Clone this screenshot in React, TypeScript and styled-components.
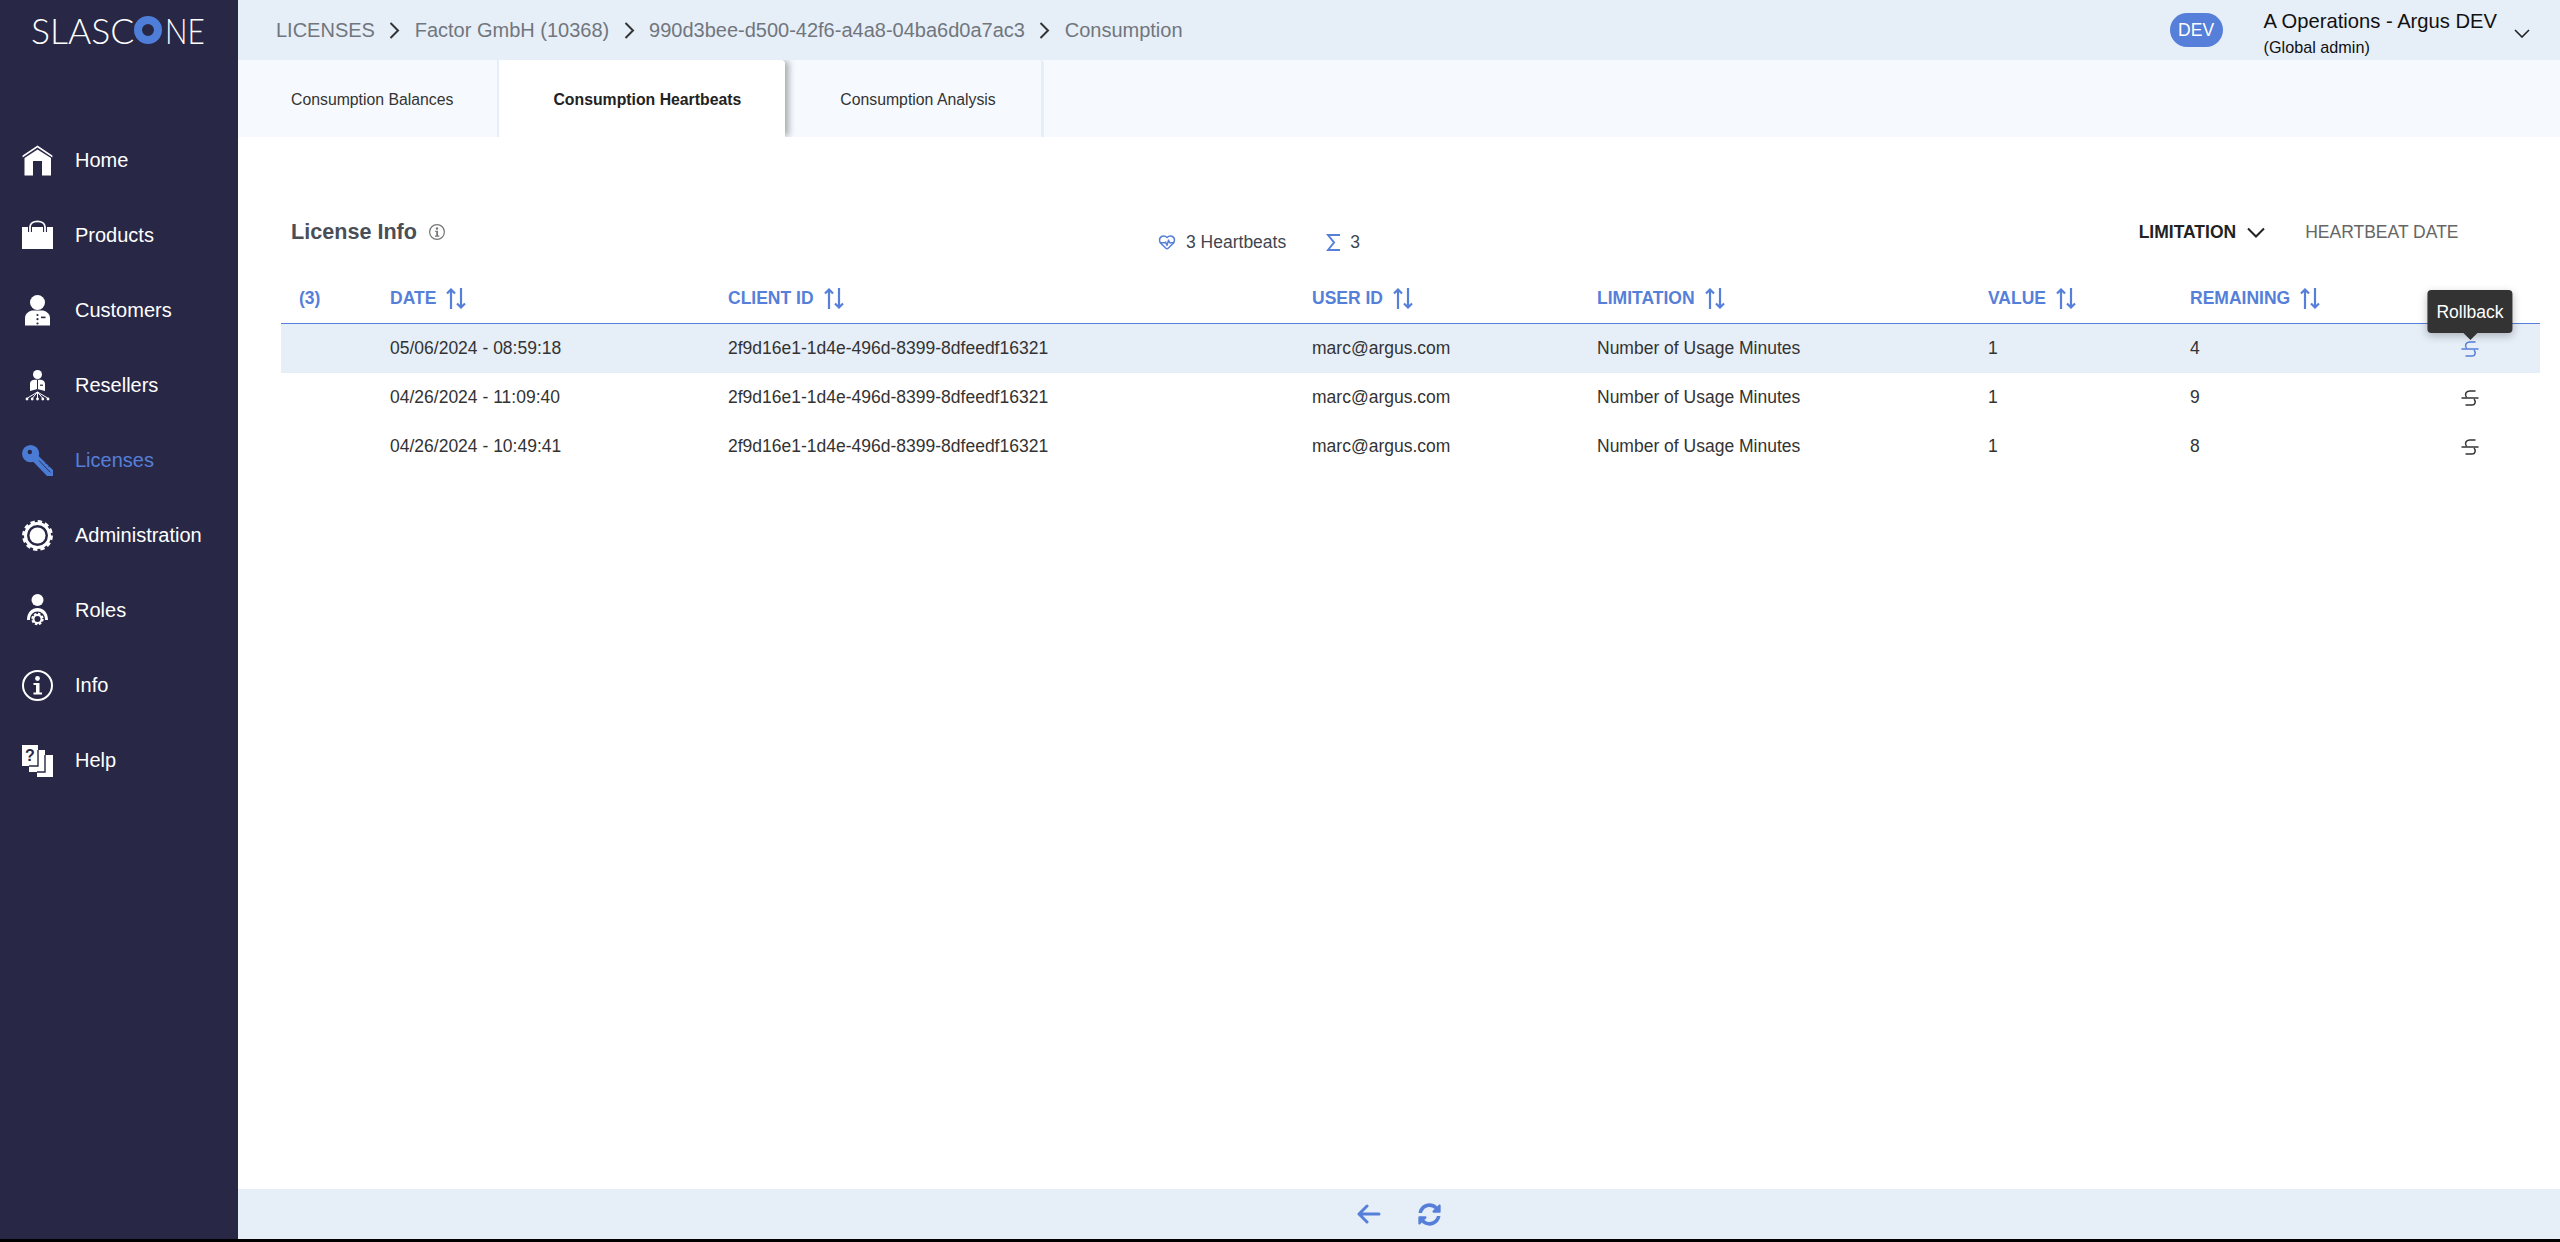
import React from 'react';
import styled, { createGlobalStyle } from 'styled-components';
import { FaSyncAlt } from 'react-icons/fa';
import { HeartPulse } from 'lucide-react';

const BLUE = '#557fd9';

const GlobalStyle = createGlobalStyle`
  html, body {
    margin: 0;
    padding: 0;
    background: #000;
    font-family: "Liberation Sans", Arial, sans-serif;
    overflow: hidden;
  }
`;

const Page = styled.div`
  display: flex;
  width: 2560px;
  height: 1239px;
  background: #fff;
`;

const Sidebar = styled.aside`
  flex: 0 0 238px;
  background: #282846;
  display: flex;
  flex-direction: column;
`;

const Logo = styled.div`
  height: 60px;
  padding-left: 31px;
  display: flex;
  align-items: center;
  color: #fff;
  font-family: Lato, "Open Sans", sans-serif;
  font-weight: 300;
  font-size: 35.5px;
  box-sizing: border-box;
`;

const LogoRing = styled.svg`
  margin: 0 3px 0 0;
  flex: none;
`;

const LogoEnd = styled.span`
  display: inline-block;
  transform: scaleX(0.84);
  transform-origin: left center;
`;

const Nav = styled.nav`
  padding-top: 63px;
  display: flex;
  flex-direction: column;
`;

const NavItem = styled.a<{ $active?: boolean }>`
  height: 75px;
  padding-left: 22px;
  display: flex;
  align-items: center;
  gap: 22px;
  font-size: 20px;
  color: ${(p) => (p.$active ? BLUE : '#fff')};
`;

const Main = styled.div`
  flex: 1;
  min-width: 0;
  display: flex;
  flex-direction: column;
`;

const TopBar = styled.header`
  height: 60px;
  flex: none;
  background: #e6eef8;
  display: flex;
  align-items: center;
  padding: 0 30px 0 38px;
`;

const Crumbs = styled.div`
  display: flex;
  align-items: center;
  gap: 14.4px;
  font-size: 20px;
  color: #71767d;
`;

const DevBadge = styled.span`
  margin-left: auto;
  width: 53px;
  height: 34px;
  border-radius: 17px;
  background: ${BLUE};
  color: #fff;
  font-size: 17.5px;
  display: flex;
  align-items: center;
  justify-content: center;
`;

const Account = styled.div`
  margin-left: 41px;
  padding-top: 6px;
  display: flex;
  flex-direction: column;
  color: #111;
`;

const AccountName = styled.span`
  font-size: 20.2px;
  line-height: 23px;
`;

const AccountRole = styled.span`
  font-size: 16.2px;
  line-height: 19px;
  margin-top: 5px;
`;

const AccountChevron = styled.svg`
  margin-left: 17px;
  margin-top: 6px;
`;

const TabBar = styled.div`
  height: 77px;
  flex: none;
  background: #f6fafe;
  display: flex;
  overflow: hidden;
`;

const Tab = styled.div<{ $active?: boolean; $pad: string }>`
  display: flex;
  align-items: center;
  padding: ${(p) => p.$pad};
  font-size: 15.8px;
  color: #333;
  border-top-right-radius: 4px;
  ${(p) =>
    p.$active
      ? `
    background: #fff;
    color: #222;
    font-weight: bold;
    box-shadow: 5px 0 6px -1px rgba(0, 0, 0, 0.3);
    position: relative;
    margin-left: -1px;
  `
      : `
    border-right: 3px solid #e6eef8;
  `}
`;

const Content = styled.main`
  flex: 1;
  padding: 0 20px 0 43px;
  display: flex;
  flex-direction: column;
`;

const InfoBar = styled.div`
  height: 137px;
  box-sizing: border-box;
  padding: 78px 81.5px 0 10px;
  display: flex;
  align-items: flex-start;
`;

const Title = styled.div`
  flex: 0 0 867px;
  display: flex;
  align-items: center;
  gap: 12px;
  height: 34px;
  font-size: 21.6px;
  font-weight: bold;
  color: #4a4f57;
`;

const Stats = styled.div`
  display: flex;
  align-items: center;
  height: 34px;
  margin-top: 10px;
  font-size: 17.5px;
  color: #3f4650;
`;

const Stat = styled.span`
  display: flex;
  align-items: center;
  gap: 10px;
  margin-right: 40px;
`;

const Groups = styled.div`
  margin-left: auto;
  display: flex;
  align-items: center;
  height: 34px;
  font-size: 17.5px;
  color: #666;
`;

const GroupActive = styled.span`
  display: flex;
  align-items: center;
  gap: 11px;
  margin-right: 40px;
  color: #222;
  font-weight: bold;
`;

const Row = styled.div<{ $head?: boolean; $hover?: boolean }>`
  display: grid;
  grid-template-columns: 109px 338px 584px 285px 391px 202px 210px 1fr;
  align-items: center;
  height: ${(p) => (p.$head ? '50px' : '49px')};
  box-sizing: border-box;
  font-size: 17.5px;
  color: ${(p) => (p.$head ? BLUE : '#333')};
  background: ${(p) => (p.$hover ? '#e6eef8' : 'transparent')};
  font-weight: ${(p) => (p.$head ? 'bold' : 'normal')};
  border-bottom: ${(p) => (p.$head ? `1.5px solid ${BLUE}` : '0')};
`;

const CountCell = styled.span`
  padding-left: 18px;
`;

const HeadCell = styled.span`
  display: flex;
  align-items: center;
  gap: 10px;
`;

const ActionCell = styled.div<{ $hover?: boolean }>`
  align-self: stretch;
  position: relative;
  display: flex;
  align-items: center;
  justify-content: center;
  color: ${(p) => (p.$hover ? BLUE : '#333')};
`;

const Tooltip = styled.div`
  position: absolute;
  left: 50%;
  bottom: calc(100% - 9px);
  transform: translateX(-50%);
  padding: 2px 9px 0;
  height: 43px;
  box-sizing: border-box;
  display: flex;
  align-items: center;
  background: #333;
  color: #fff;
  font-size: 17.5px;
  border-radius: 4px;
  box-shadow: 0 3px 8px rgba(0, 0, 0, 0.25);
  &::after {
    content: '';
    position: absolute;
    top: 100%;
    left: 50%;
    margin-left: -7px;
    border: 7px solid transparent;
    border-top-color: #333;
    border-bottom: 0;
  }
`;

const Footer = styled.footer`
  height: 50px;
  flex: none;
  background: #e6eef8;
  display: flex;
  align-items: center;
  justify-content: center;
  gap: 37px;
  color: ${BLUE};
`;

const Chevron = () => (
  <svg width="11" height="17" viewBox="0 0 11 17" fill="none" stroke="#333" strokeWidth="2">
    <path d="M1.5 1 L9 8.5 L1.5 16" />
  </svg>
);

const SortIcon = () => (
  <svg width="21" height="21" viewBox="0 0 21 21" fill="none" stroke={BLUE} strokeWidth="2.2">
    <path d="M5 21 V1.5 M1 5.5 L5 1.5 L9 5.5" />
    <path d="M15 0 V19.5 M11 15.5 L15 19.5 L19 15.5" />
  </svg>
);

const RollbackIcon = () => (
  <svg width="18" height="16" viewBox="0 0 18 16" fill="none" stroke="currentColor" strokeWidth="1.5">
    <path d="M0.5 8 H17.5" />
    <path d="M14.5 1 H8.5 C5 1 3.2 4.5 5.6 7.4" />
    <path d="M13 9 C15.2 11.5 14.2 15 11 15 H4.5" />
  </svg>
);

const HomeIcon = () => (
  <svg width="31" height="31" viewBox="0 0 31 31" fill="#fff">
    <path d="M0.6 10.6 L15.5 0.4 L30.4 10.6 L30.4 12.4 L15.5 2.6 L0.6 12.4 Z" />
    <path d="M2.5 13 L15.5 4.6 L29 13 V30.6 H20 V16 H11 V30.6 H2.5 Z" />
  </svg>
);

const ProductsIcon = () => (
  <svg width="31" height="33" viewBox="0 0 31 33" fill="none">
    <rect x="0" y="8" width="31" height="22" fill="#fff" />
    <path d="M8 13 V8 C8 -1.5 23 -1.5 23 8 V13" stroke="#282846" strokeWidth="4" />
    <path d="M8 13 V8 C8 0.5 23 0.5 23 8 V13" stroke="#fff" strokeWidth="1.8" />
  </svg>
);

const CustomersIcon = () => (
  <svg width="31" height="31" viewBox="0 0 31 31">
    <circle cx="15.5" cy="7.5" r="7.5" fill="#fff" />
    <path d="M3 30.6 V23 C3 18 8 15.5 11 15.5 H20 C23 15.5 28 18 28 23 V30.6 Z" fill="#fff" />
    <g fill="#282846">
      <circle cx="15.5" cy="20" r="1.1" />
      <circle cx="15.5" cy="24.2" r="1.1" />
      <circle cx="15.5" cy="28.5" r="1.1" />
      <rect x="19" y="21.6" width="4.5" height="1.6" />
    </g>
  </svg>
);

const ResellersIcon = () => (
  <svg width="31" height="31" viewBox="0 0 31 31">
    <circle cx="15.5" cy="4.5" r="4.5" fill="#fff" />
    <path d="M8 21 V14 C8 11 10.5 9.8 13 9.8 H18 C20.5 9.8 23 11 23 14 V21 L15.5 19 Z" fill="#fff" />
    <path d="M15.5 10 V19" stroke="#282846" strokeWidth="1" />
    <rect x="18" y="14.6" width="3" height="1.2" fill="#282846" />
    <path d="M15.5 22 L5.5 28 M15.5 22 L10.5 28 M15.5 22 V28 M15.5 22 L20.5 28 M15.5 22 L25.5 28" stroke="#fff" strokeWidth="1" />
    <g fill="#fff">
      <circle cx="5" cy="29" r="1.4" />
      <circle cx="10.2" cy="29" r="1.4" />
      <circle cx="15.5" cy="29" r="1.4" />
      <circle cx="20.8" cy="29" r="1.4" />
      <circle cx="26" cy="29" r="1.4" />
    </g>
  </svg>
);

const KeyIcon = () => (
  <svg width="31" height="31" viewBox="0 0 31 31">
    <circle cx="8.6" cy="8.6" r="8.6" fill="#4a7bd5" />
    <circle cx="7.8" cy="7" r="2.2" fill="#282846" />
    <path d="M10 15.5 L15.5 10 L31 25 V31 H25 Z" fill="#4a7bd5" />
    <path d="M17 15.5 L28.5 27.5 M23.5 19 L26 16.5 M26.5 22 L29 19.5" stroke="#282846" strokeWidth="0.9" />
  </svg>
);

const GearIcon = () => (
  <svg width="31" height="31" viewBox="0 0 31 31" fill="none">
    <circle cx="15.5" cy="15.5" r="13.6" stroke="#fff" strokeWidth="3.6" strokeDasharray="4.2 2.9" />
    <circle cx="15.5" cy="15.5" r="12" stroke="#fff" strokeWidth="3" />
    <circle cx="15.5" cy="15.5" r="8" fill="#fff" />
  </svg>
);

const RolesIcon = () => (
  <svg width="31" height="33" viewBox="0 0 31 33" fill="none">
    <circle cx="15.5" cy="6" r="6" fill="#fff" />
    <path d="M5 26 C5 18 10 14 15.5 14 C21 14 26 18 26 26 H22 C22 21 19 18 15.5 18 C12 18 9 21 9 26 Z" fill="#fff" />
    <circle cx="15.5" cy="25" r="7.6" fill="#282846" />
    <circle cx="15.5" cy="25" r="5" stroke="#fff" strokeWidth="2.4" strokeDasharray="2.4 1.5" />
    <circle cx="15.5" cy="25" r="4" stroke="#fff" strokeWidth="2" />
  </svg>
);

const InfoIcon = ({ size = 31, color = '#fff', stroke = 2 }: { size?: number; color?: string; stroke?: number }) => (
  <svg width={size} height={size} viewBox="0 0 31 31" fill="none">
    <circle cx="15.5" cy="15.5" r={15.5 - stroke / 2} stroke={color} strokeWidth={stroke} />
    <circle cx="15.5" cy="8.5" r="2.4" fill={color} />
    <path d="M11.5 13 H17.5 V22.5 H20 V24.5 H11.5 V22.5 H14 V15 H11.5 Z" fill={color} />
  </svg>
);

const HelpIcon = () => (
  <svg width="31" height="32" viewBox="0 0 31 32">
    <rect x="15" y="10" width="16" height="22" fill="#fff" />
    <rect x="7" y="5" width="16" height="22" fill="#fff" />
    <path d="M23 10 V27 H15" stroke="#282846" strokeWidth="1.4" fill="none" />
    <rect x="0" y="0" width="16" height="21" fill="#fff" />
    <path d="M16 5 V21 H7" stroke="#282846" strokeWidth="1.4" fill="none" />
    <text x="8" y="15.5" textAnchor="middle" fontSize="16" fontWeight="bold" fontFamily="Liberation Sans" fill="#282846">?</text>
  </svg>
);

const navItems = [
  { label: 'Home', icon: <HomeIcon /> },
  { label: 'Products', icon: <ProductsIcon /> },
  { label: 'Customers', icon: <CustomersIcon /> },
  { label: 'Resellers', icon: <ResellersIcon /> },
  { label: 'Licenses', icon: <KeyIcon />, active: true },
  { label: 'Administration', icon: <GearIcon /> },
  { label: 'Roles', icon: <RolesIcon /> },
  { label: 'Info', icon: <InfoIcon /> },
  { label: 'Help', icon: <HelpIcon /> },
];

const columns = ['DATE', 'CLIENT ID', 'USER ID', 'LIMITATION', 'VALUE', 'REMAINING'];

const rows = [
  { date: '05/06/2024 - 08:59:18', remaining: '4' },
  { date: '04/26/2024 - 11:09:40', remaining: '9' },
  { date: '04/26/2024 - 10:49:41', remaining: '8' },
];

export default function App() {
  return (
    <>
      <GlobalStyle />
      <Page>
        <Sidebar>
          <Logo>
            SLASC
            <LogoRing width="28" height="28" viewBox="0 0 28 28">
              <circle cx="14" cy="14" r="10" fill="none" stroke="#4f7ed8" strokeWidth="8" />
            </LogoRing>
            <LogoEnd>NE</LogoEnd>
          </Logo>
          <Nav>
            {navItems.map((item) => (
              <NavItem key={item.label} $active={item.active}>
                {item.icon}
                {item.label}
              </NavItem>
            ))}
          </Nav>
        </Sidebar>
        <Main>
          <TopBar>
            <Crumbs>
              LICENSES
              <Chevron />
              Factor GmbH (10368)
              <Chevron />
              990d3bee-d500-42f6-a4a8-04ba6d0a7ac3
              <Chevron />
              Consumption
            </Crumbs>
            <DevBadge>DEV</DevBadge>
            <Account>
              <AccountName>A Operations - Argus DEV</AccountName>
              <AccountRole>(Global admin)</AccountRole>
            </Account>
            <AccountChevron width="16" height="9" viewBox="0 0 16 9" fill="none" stroke="#222" strokeWidth="1.6">
              <path d="M1 1 L8 8 L15 1" />
            </AccountChevron>
          </TopBar>
          <TabBar>
            <Tab $pad="2px 44px 0 53px">Consumption Balances</Tab>
            <Tab $active $pad="2px 44px 0 54px">Consumption Heartbeats</Tab>
            <Tab $pad="2px 45px 0 55px">Consumption Analysis</Tab>
          </TabBar>
          <Content>
            <InfoBar>
              <Title>
                License Info
                <InfoIcon size={16} color="#777" stroke={2.4} />
              </Title>
              <Stats>
                <Stat>
                  <HeartPulse size={18} color={BLUE} strokeWidth={2} />
                  3 Heartbeats
                </Stat>
                <Stat>
                  <svg width="14" height="17" viewBox="0 0 14 17" fill="none" stroke={BLUE} strokeWidth="2">
                    <path d="M14 1 H2 L8 8.5 L2 16 H14" />
                  </svg>
                  3
                </Stat>
              </Stats>
              <Groups>
                <GroupActive>
                  LIMITATION
                  <svg width="18" height="11" viewBox="0 0 18 11" fill="none" stroke="#222" strokeWidth="2">
                    <path d="M1 1.5 L9 9.5 L17 1.5" />
                  </svg>
                </GroupActive>
                HEARTBEAT DATE
              </Groups>
            </InfoBar>
            <Row $head>
              <CountCell>(3)</CountCell>
              {columns.map((col) => (
                <HeadCell key={col}>
                  {col}
                  <SortIcon />
                </HeadCell>
              ))}
            </Row>
            {rows.map((row, i) => (
              <Row key={row.date} $hover={i === 0}>
                <span />
                <span>{row.date}</span>
                <span>2f9d16e1-1d4e-496d-8399-8dfeedf16321</span>
                <span>marc@argus.com</span>
                <span>Number of Usage Minutes</span>
                <span>1</span>
                <span>{row.remaining}</span>
                <ActionCell $hover={i === 0}>
                  <RollbackIcon />
                  {i === 0 && <Tooltip>Rollback</Tooltip>}
                </ActionCell>
              </Row>
            ))}
          </Content>
          <Footer>
            <svg width="24" height="20" viewBox="0 0 24 20" fill="none" stroke={BLUE} strokeWidth="3" strokeLinecap="round" strokeLinejoin="round">
              <path d="M22 10 H2 M10 2 L2 10 L10 18" />
            </svg>
            <FaSyncAlt size={23} />
          </Footer>
        </Main>
      </Page>
    </>
  );
}
